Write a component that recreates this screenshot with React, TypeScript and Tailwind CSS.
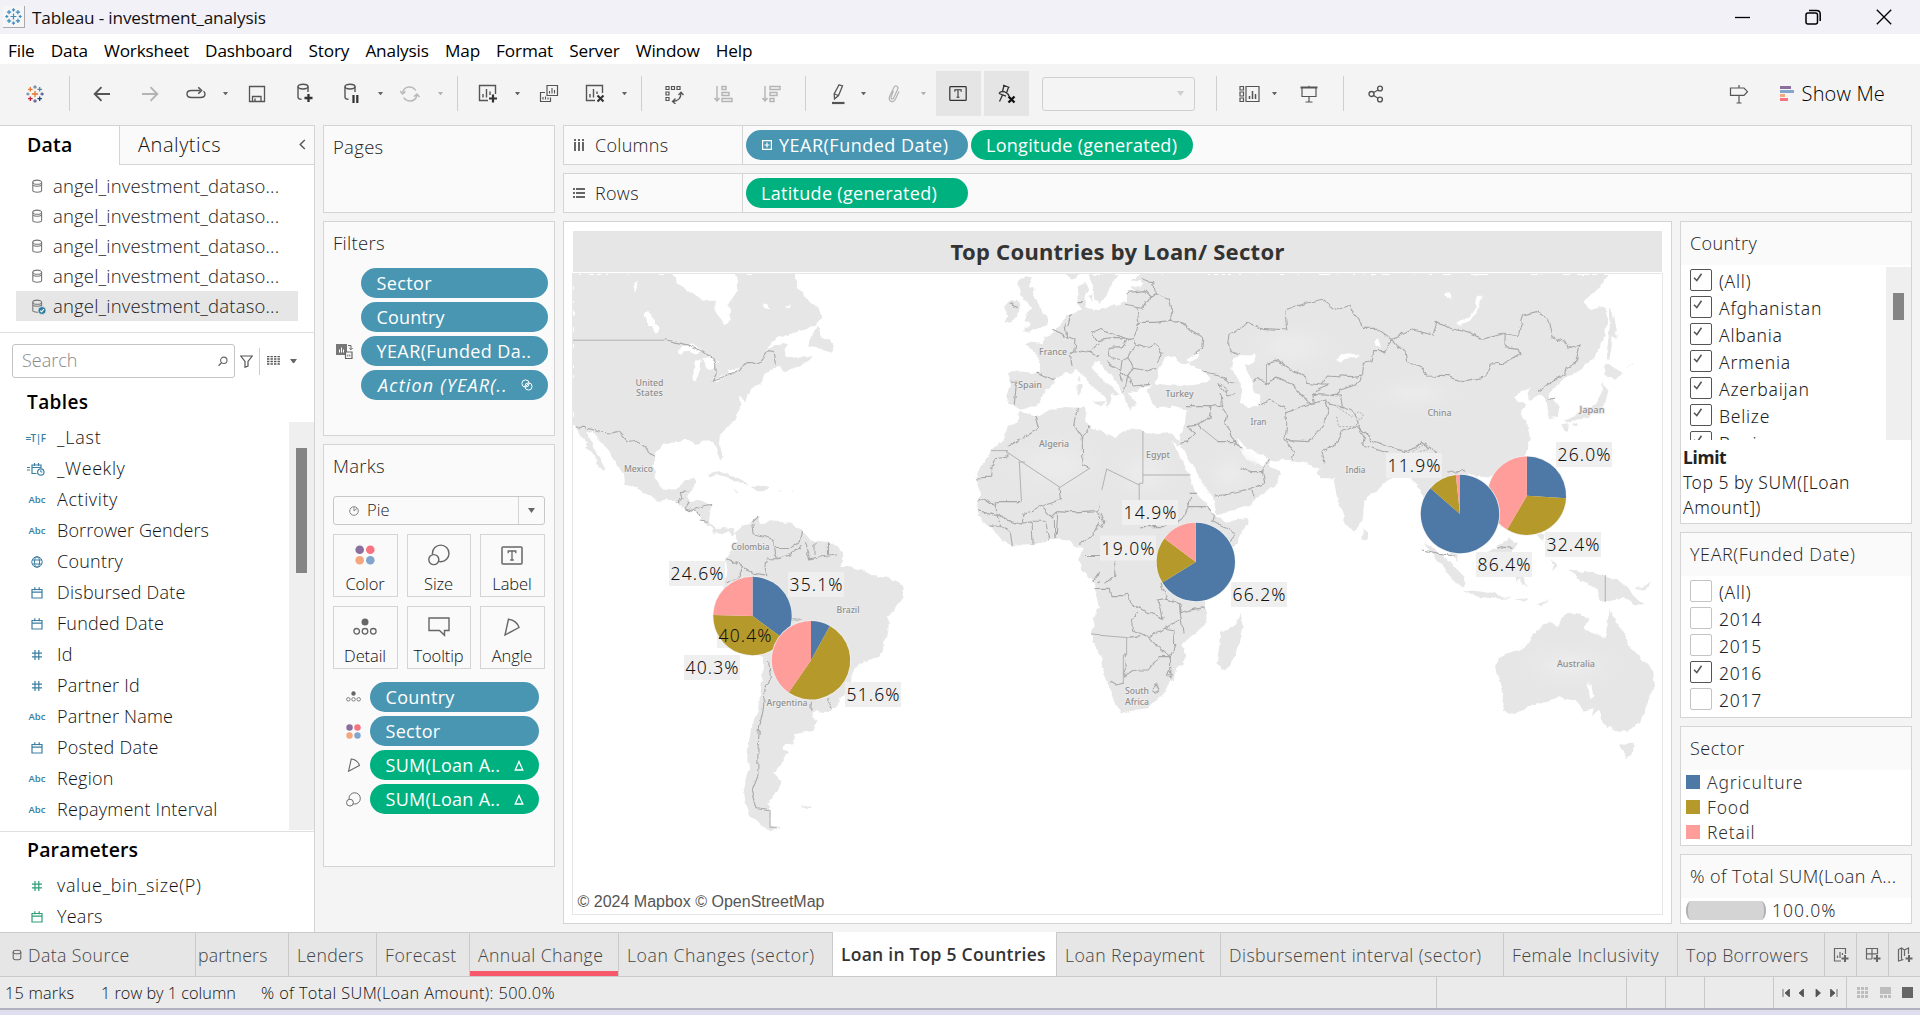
import React from "react";

const UI = "font-['Open_Sans','Noto_Sans',sans-serif]";

/* ---------- icons ---------- */
type IP = { className?: string; children?: React.ReactNode; w?: number; h?: number; vb?: string };
const Ico = ({ className = "", children, w = 20, h = 20, vb }: IP) => (
  <svg
    width={w}
    height={h}
    viewBox={vb ?? `0 0 ${w} ${h}`}
    fill="none"
    stroke="currentColor"
    strokeWidth={1.4}
    className={`shrink-0 ${className}`}
  >
    {children}
  </svg>
);

const Caret = ({ w = 5, className = "text-[#666]" }: { w?: number; className?: string }) => (
  <svg width={w} height={w * 0.7} viewBox="0 0 10 7" className={`shrink-0 ${className}`}>
    <path d="M0 0h10L5 7z" fill="currentColor" />
  </svg>
);

const plus = (x: number, y: number, r: number) => `M${x - r} ${y}h${r * 2}M${x} ${y - r}v${r * 2}`;

const TableauLogo = ({ mono = false, size = 18 }: { mono?: boolean; size?: number }) => {
  const c = mono
    ? Array(9).fill("#3f8ac0")
    : ["#e8762c", "#6b8fb0", "#e8762c", "#5b879b", "#7b95a5", "#59589b", "#c72035", "#5b6591", "#1f457e"];
  const pts: [number, number, number][] = [
    [9, 9, 3.1],
    [9, 2, 1.7],
    [4.3, 4.3, 2.3],
    [13.7, 4.3, 2.3],
    [1.9, 9, 1.6],
    [16.1, 9, 1.6],
    [4.3, 13.7, 2.3],
    [9, 16, 1.7],
    [13.7, 13.7, 2.3],
  ];
  return (
    <svg width={size} height={size} viewBox="0 0 18 18" className="shrink-0">
      {pts.map(([x, y, r], i) => (
        <path key={i} d={plus(x, y, r)} stroke={c[i]} strokeWidth={1.3} fill="none" />
      ))}
    </svg>
  );
};

const Cyl = ({ x = 0, cut = false }: { x?: number; cut?: boolean }) => (
  <g transform={`translate(${x} 0)`}>
    <ellipse cx="6" cy="3.6" rx="5" ry="2.4" />
    <path d={cut ? "M1 3.6v10.6c0 1.2 1.6 2 3.6 2.2M11 3.6v5.4" : "M1 3.6v10c0 1.3 2.2 2.4 5 2.4s5-1.1 5-2.4v-10"} />
  </g>
);

const DbIcon = ({ checked = false }: { checked?: boolean }) => (
  <Ico w={15} h={18} className="mt-[2px] text-[#777]">
    <g strokeWidth={1.1}>
      <ellipse cx="5.2" cy="4.2" rx="4.4" ry="2.1" />
      <path d="M.8 4.2v8.400c0 1.200 1.400 1.600 4.400 1.600s4.400-.4 4.400-1.600V4.200M.9 7.100c1 .9 2.300 1.200 4.300 1.200s3.300-.3 4.300-1.200" />
    </g>
    {checked && (
      <>
        <circle cx="10" cy="12.5" r="4" fill="#2e7ba0" stroke="#e6e6e6" strokeWidth={0.8} />
        <path d="M8.200 12.500l1.300 1.400 2.400-2.800" stroke="#fff" strokeWidth={1.1} />
      </>
    )}
  </Ico>
);

const CalShape = () => <path d="M1 3.500h10v8.500H1zM1 6.200h10M3.800 1.200v3M8.200 1.200v3" />;

const FieldIcon = ({ kind, green = false }: { kind: string; green?: boolean }) => {
  const color = green ? "text-[#2e9d76]" : "text-[#3a7ea1]";
  if (kind === "abc") return <span className={`text-[9.5px] font-semibold leading-none tracking-[0.1px] ${color}`}>Abc</span>;
  if (kind === "tf") return <span className={`text-[10px] font-semibold leading-none tracking-[-0.5px] ${color}`}>=T|F</span>;
  if (kind === "hash")
    return (
      <Ico w={12} h={12} className={color}>
        <path d="M4 1v10M7.800 1v10M1 4.200h10M1 7.800h10" strokeWidth={1.2} />
      </Ico>
    );
  if (kind === "globe")
    return (
      <Ico w={12} h={12} className={color}>
        <g strokeWidth={1}>
          <circle cx="6" cy="6" r="5.2" />
          <ellipse cx="6" cy="6" rx="2.5" ry="5.2" />
          <path d="M1.300 4h9.400M1.300 8h9.400" />
        </g>
      </Ico>
    );
  if (kind === "calc")
    return (
      <Ico w={18} h={14} className={color}>
        <g strokeWidth={1.2}>
          <path d="M0 5.500h3M0 8h3M14 6V3H5v8.500h4.500M5 5.500h9M7.500 1v3M11.500 1v3" />
          <circle cx="13.8" cy="10" r="3.2" />
          <path d="M13.800 8.200V10h1.500" strokeWidth={1} />
        </g>
      </Ico>
    );
  return (
    <Ico w={12} h={13} className={color}>
      <g strokeWidth={1.2}>
        <CalShape />
      </g>
    </Ico>
  );
};

const ColorDots = ({ s = 20 }: { s?: number }) => (
  <svg width={s} height={s} viewBox="0 0 20 20" className="shrink-0">
    <circle cx="4.7" cy="4.7" r="4.3" fill="#8a6f9e" />
    <circle cx="15.3" cy="4.7" r="4.3" fill="#f8727f" />
    <circle cx="4.7" cy="15.3" r="4.3" fill="#f4a77d" />
    <circle cx="15.3" cy="15.3" r="4.3" fill="#81a5cd" />
  </svg>
);
const SizeIcon = ({ s = 22 }: { s?: number }) => (
  <svg width={s} height={s} viewBox="0 0 22 22" fill="none" stroke="#666" strokeWidth={1.4} className="shrink-0">
    <circle cx="12.7" cy="9.4" r="8.3" />
    <circle cx="5.8" cy="15.6" r="5" fill="#fafafa" />
  </svg>
);
const DetailIcon = ({ s = 24 }: { s?: number }) => (
  <svg width={s} height={s * 0.75} viewBox="0 0 24 18" fill="none" stroke="#666" strokeWidth={1.3} className="shrink-0">
    <circle cx="12" cy="4" r="3.5" fill="#666" stroke="none" />
    <circle cx="3.7" cy="13.3" r="2.8" />
    <circle cx="12" cy="13.3" r="2.8" />
    <circle cx="20.3" cy="13.3" r="2.8" />
  </svg>
);
const AngleIcon = ({ s = 18 }: { s?: number }) => (
  <svg width={s} height={s} viewBox="0 0 18 18" fill="none" stroke="#666" strokeWidth={1.4} className="shrink-0">
    <path d="M5.500 1.200L2 17l14-7.500C14.500 5 10.500 1.800 5.500 1.200z" />
  </svg>
);
const TBox = ({ w, h, c = "#555" }: { w: number; h: number; c?: string }) => (
  <svg width={w} height={h} viewBox="0 0 22 19" fill="none" stroke={c} className="shrink-0">
    <rect x="1" y="1" width="20" height="17" rx="1" strokeWidth={1.5} />
    <path d="M7.200 7.300V5h7.600v2.300M11 5v9M9.200 14h3.600" strokeWidth={1.3} />
  </svg>
);

/* ---------- toolbar ---------- */
const Slot = ({ className, children }: { className: string; children: React.ReactNode }) => (
  <div className={`flex shrink-0 items-center justify-center ${className}`}>{children}</div>
);
const Sep = ({ className }: { className: string }) => <div className={`h-[35px] w-px shrink-0 bg-[#cfcfcf] ${className}`} />;

const Toolbar = () => (
  <div className="flex h-[61px] shrink-0 items-center bg-[#f4f4f4] pb-[2px] text-[#555]">
    <Slot className="w-[69px]">
      <TableauLogo />
    </Slot>
    <Sep className="" />
    <Slot className="ml-2 w-12">
      <Ico>
        <path d="M18 10H3M9.500 3.200L2.700 10l6.800 6.800" strokeWidth={1.9} />
      </Ico>
    </Slot>
    <Slot className="w-12 text-[#b3b3b3]">
      <Ico>
        <path d="M2 10h15M10.500 3.200l6.800 6.800-6.800 6.800" strokeWidth={1.9} />
      </Ico>
    </Slot>
    <Slot className="w-[44px]">
      <Ico>
        <path d="M14 6.500H5.500C2.800 6.500 1 7.800 1 10s1.800 3.500 4.500 3.500h9c2.700 0 4.500-1.300 4.500-3.500 0-1-.5-2-1.500-2.700" />
        <path d="M12.300 3.300l3.200 3.200-3.200 3.200" strokeWidth={1.6} />
      </Ico>
    </Slot>
    <Slot className="w-[15px]">
      <Caret />
    </Slot>
    <Slot className="w-12">
      <Ico>
        <path d="M2.500 2.500h15v15h-15zM5.500 17.500v-5h8.500v5M8 17v-2.500" strokeWidth={1.3} />
      </Ico>
    </Slot>
    <Slot className="w-12">
      <Ico w={20} h={22}>
        <Cyl x={2} cut />
        <path d="M13.500 11v8M9.500 15h8" stroke="#333" strokeWidth={2.3} />
      </Ico>
    </Slot>
    <Slot className="w-[46px]">
      <Ico w={20} h={22}>
        <Cyl x={2} cut />
        <path d="M11.500 12v8M15.300 12v8" stroke="#333" strokeWidth={2.2} />
      </Ico>
    </Slot>
    <Slot className="w-[11px]">
      <Caret />
    </Slot>
    <Slot className="w-12 text-[#b9b9b9]">
      <Ico>
        <path d="M2.500 9C3.200 5.300 6 3 9.500 3c2.700 0 4.800 1.300 6.200 3.500M17 11c-.7 3.700-3.500 6-7 6-2.700 0-4.800-1.300-6.200-3.500" />
        <path d="M0 7l2.500 3 3-2.600M19.500 13L17 10l-3 2.600" />
      </Ico>
    </Slot>
    <Slot className="w-3">
      <Caret className="text-[#b3b3b3]" />
    </Slot>
    <Sep className="ml-[11px]" />
    <Slot className="ml-[6px] w-12">
      <Ico w={20} h={21}>
        <path d="M10 17.500H1.500v-15h16V11" />
        <path d="M5 14.500V11M8.500 14.500V6M12 12V8.500" />
        <path d="M15 11.500v8M11 15.500h8" stroke="#333" strokeWidth={2.2} />
      </Ico>
    </Slot>
    <Slot className="w-[11px]">
      <Caret />
    </Slot>
    <Slot className="w-[52px]">
      <Ico>
        <path d="M6 8.500H1.500v9h10v-4M8 1.500h10.500v10H8z" strokeWidth={1.2} />
        <path d="M10.500 9.500V7M13 9.500V4M15.500 9.500V6M4 15.500V13M6.500 15.500V12.500M9 15.500V13.500" strokeWidth={1.1} />
      </Ico>
    </Slot>
    <Slot className="w-10">
      <Ico w={20} h={21}>
        <path d="M10 17.500H1.500v-15h16V10" />
        <path d="M5 14.500V11M8.500 14.500V6M12 11V8.500" />
        <path d="M12.500 12.500l6 6M18.500 12.500l-6 6" stroke="#333" strokeWidth={2.1} />
      </Ico>
    </Slot>
    <Slot className="w-[18px]">
      <Caret />
    </Slot>
    <Sep className="ml-2" />
    <Slot className="ml-2 w-12">
      <Ico>
        <path d="M2 2.500h3v3H2zM7.500 2.500h3v3h-3zM13 2.500h3v3h-3zM2 8h3v3H2zM2 13.500h3v3H2z" strokeWidth={1.2} />
        <path d="M17 9c0 5-2.500 8-8 8.500M14.500 11L17 8.300l2.500 2.700M11.500 14.500l-3 3 3 2.500" strokeWidth={1.3} />
      </Ico>
    </Slot>
    <Slot className="w-[49px] text-[#b3b3b3]">
      <Ico>
        <path d="M4 2v15M1.500 14L4 17l2.500-3M9 2.500h4v3H9zM9 8.500h7v3H9zM9 14.500h10v3H9z" />
      </Ico>
    </Slot>
    <Slot className="w-12 text-[#b3b3b3]">
      <Ico>
        <path d="M4 2v15M1.500 14L4 17l2.500-3M9 2.500h10v3H9zM9 8.500h7v3H9zM9 14.500h4v3H9z" />
      </Ico>
    </Slot>
    <Sep className="ml-[10px]" />
    <Slot className="ml-[14px] w-9">
      <Ico w={18} h={22}>
        <path d="M10 1.800l3.500 1.200-4 9.500-4 3.500-.3-5zM5.500 11l4 1.500" strokeWidth={1.3} />
        <path d="M3 20h12.500" strokeWidth={2.2} />
      </Ico>
    </Slot>
    <Slot className="w-[14px]">
      <Caret />
    </Slot>
    <Slot className="w-[50px] text-[#b3b3b3]">
      <Ico>
        <path
          d="M8 7l-1.500 6.500c-.3 2 2 2.500 2.600.8L12 5c.8-3-2.800-4.500-4-1.200L5 13c-1.200 5.500 4.800 6.500 6 2.500l2.600-8.500"
          transform="rotate(8 10 10)"
          strokeWidth={1.2}
        />
      </Ico>
    </Slot>
    <Slot className="w-[7px]">
      <Caret className="text-[#b3b3b3]" />
    </Slot>
    <Slot className="ml-[9px] h-[45px] w-[45px] bg-[#e5e5e5] pr-px">
      <TBox w={18} h={17} c="#333" />
    </Slot>
    <Slot className="ml-[3px] h-[45px] w-[45px] bg-[#e5e5e5]">
      <Ico w={20} h={20} className="text-[#333]">
        <path d="M6 1l6.500 2.500M7 1.500L5.500 7.500M11.500 3.300L9.500 9M2 9.500C3 7.500 6 7 8 8s3.500 2 4 4M2 9.500l7 2.700M5.500 11l-3 6.500" strokeWidth={1.3} />
        <path d="M11.500 12.500l6 6M17.500 12.500l-6 6" stroke="#111" strokeWidth={2.3} />
      </Ico>
    </Slot>
    <div className="ml-[13px] flex h-[34px] w-[153px] shrink-0 items-center justify-end rounded-[3px] border border-[#cfcfcf] pr-[10px]">
      <Caret w={7} className="text-[#cfcfcf]" />
    </div>
    <Sep className="ml-[21px]" />
    <Slot className="ml-[13px] w-[38px]">
      <Ico w={21} h={18}>
        <path d="M1 1.500h3.500V5H1zM1 7h3.500v4H1zM1 13h3.500v3.500H1zM7 1.500h13v15H7z" strokeWidth={1.2} />
        <path d="M10.500 14v-3M13.500 14V6M16.500 14V9" strokeWidth={1.5} />
      </Ico>
    </Slot>
    <Slot className="w-3">
      <Caret />
    </Slot>
    <Slot className="ml-[5px] w-12">
      <Ico w={18} h={18}>
        <path d="M.500 2.500h17" strokeWidth={2} />
        <path d="M2 3v8.500h14V3M9 .8V2M9 11.500V17M5.500 17h7" strokeWidth={1.2} />
      </Ico>
    </Slot>
    <Sep className="ml-[10px]" />
    <Slot className="ml-2 w-12">
      <Ico w={16} h={18}>
        <circle cx="3.5" cy="9" r="2.5" />
        <circle cx="12" cy="3.5" r="2.4" />
        <circle cx="12" cy="14.5" r="2.4" />
        <path d="M5.700 7.500L10 5M5.700 10.500l4.300 2.700" strokeWidth={1.2} />
      </Ico>
    </Slot>
    <Slot className="ml-auto w-12">
      <Ico w={20} h={20}>
        <path d="M1.500 4h13.500l3.500 3.700-3.500 3.600H1.500zM10 1v3M10 11.500V19M7.500 19h5" strokeWidth={1.2} />
      </Ico>
    </Slot>
    <svg width="14" height="15" viewBox="0 0 14 15" className="ml-[17px] shrink-0">
      <path d="M0 0h11v3H0z" fill="#8a6f9e" />
      <path d="M0 4h14v3H0z" fill="#81a5cd" />
      <path d="M0 8h5v3H0z" fill="#f4a77d" />
      <path d="M0 12h8v3H0z" fill="#f8727f" />
    </svg>
    <span className="ml-2 mr-[35px] whitespace-nowrap text-[20px] tracking-[0.15px] text-black">Show Me</span>
  </div>
);

/* ---------- pills and cards ---------- */
const Pill = ({ green = false, className = "", children }: { green?: boolean; className?: string; children: React.ReactNode }) => (
  <div
    className={`flex h-[30px] shrink-0 items-center whitespace-nowrap rounded-full text-[18px] font-normal text-white ${
      green ? "bg-[#00b180]" : "bg-[#4996b2]"
    } ${className}`}
  >
    {children}
  </div>
);

const Card = ({ className = "", children }: { className?: string; children?: React.ReactNode }) => (
  <div className={`shrink-0 border border-[#d4d4d4] bg-[#fafafa] ${className}`}>{children}</div>
);

const Delta = () => (
  <svg width="10" height="11" viewBox="0 0 10 11" fill="none" stroke="#fff" strokeWidth={1.3}>
    <path d="M5 1.500L1.200 10h7.600z" />
  </svg>
);

const MarkButton = ({ label, children }: { label: string; children: React.ReactNode }) => (
  <div className="flex h-[63px] flex-col items-center border border-[#d4d4d4] pt-1">
    <div className="flex h-8 items-center pr-px">{children}</div>
    <span className="mt-px pr-px text-[16.5px] leading-[24px] tracking-[-0.1px] text-[#111]">{label}</span>
  </div>
);

/* ---------- left data pane ---------- */
const FIELDS: [string, string][] = [
  ["tf", "_Last"],
  ["calc", "_Weekly"],
  ["abc", "Activity"],
  ["abc", "Borrower Genders"],
  ["globe", "Country"],
  ["cal", "Disbursed Date"],
  ["cal", "Funded Date"],
  ["hash", "Id"],
  ["hash", "Partner Id"],
  ["abc", "Partner Name"],
  ["cal", "Posted Date"],
  ["abc", "Region"],
  ["abc", "Repayment Interval"],
];

const SPACING: Record<string, string> = {
  _Last: "tracking-[0.8px]",
  _Weekly: "tracking-[0.6px]",
  Activity: "tracking-[0.6px]",
  "Borrower Genders": "tracking-[0.1px]",
  "Partner Name": "tracking-[0.22px]",
  "value_bin_size(P)": "tracking-[0.65px]",
};

const FieldRow = ({ kind, label, green = false }: { kind: string; label: string; green?: boolean }) => (
  <div className="flex h-[31px] items-center">
    <div className={`flex items-center justify-center pl-[17px] ${kind === "tf" || kind === "calc" ? "w-[54px]" : "w-[57px]"}`}>
      <FieldIcon kind={kind} green={green} />
    </div>
    <span
      className={`whitespace-nowrap text-[18px] text-[#111] ${SPACING[label] ?? "tracking-[0.24px]"} ${
        kind === "tf" || kind === "calc" ? "ml-[3px]" : ""
      }`}
    >
      {label}
    </span>
  </div>
);

const DataPane = () => (
  <div className="flex h-[807px] w-[315px] shrink-0 flex-col border-r border-t border-[#d4d4d4] bg-white">
    <div className="flex h-[39px] shrink-0">
      <div className="flex w-[119px] items-center pb-[2px] pl-[27px] text-[19.5px] font-semibold tracking-[0.2px] text-black">Data</div>
      <div className="flex flex-1 items-center justify-between border-b border-l border-[#d4d4d4] bg-[#fafafa] pb-px pl-[18px] pr-[8px]">
        <span className="text-[20px] tracking-[0.55px] text-[#111]">Analytics</span>
        <Ico w={7} h={11} className="text-[#555]">
          <path d="M5.800 1L1.200 5.500l4.600 4.500" />
        </Ico>
      </div>
    </div>
    <div className="mt-[6px] pl-4 pr-4">
      {[0, 1, 2, 3, 4].map((i) => (
        <div key={i} className={`flex h-[30px] items-center pl-4 ${i === 4 ? "bg-[#e6e6e6]" : ""}`}>
          <DbIcon checked={i === 4} />
          <span className="ml-[6px] whitespace-nowrap text-[18.5px] tracking-[0.18px] text-[#222]">angel_investment_dataso...</span>
        </div>
      ))}
    </div>
    <div className="mt-[11px] h-px shrink-0 bg-[#e0e0e0]" />
    <div className="mt-[11px] flex h-[34px] shrink-0 items-center">
      <div className="ml-3 flex h-[34px] w-[223px] items-center justify-between rounded-[3px] border border-[#c4c4c4] pl-[9px] pr-[6px]">
        <span className="pb-[2px] text-[18px] text-[#888]">Search</span>
        <Ico w={11} h={11} className="text-[#666]">
          <circle cx="6.8" cy="4.3" r="3.2" strokeWidth={1.1} />
          <path d="M4.500 6.800L1.500 9.800" strokeWidth={1.3} />
        </Ico>
      </div>
      <Ico w={13} h={14} className="ml-[5px] text-[#555]">
        <path d="M.8 2h11.400L8 7.500V12l-3 1.200V7.500z" strokeWidth={1.2} />
      </Ico>
      <div className="ml-[6px] h-[27px] w-px bg-[#cfcfcf]" />
      <svg width="13" height="10" viewBox="0 0 13 10" className="ml-[7px]">
        <path d="M0 .5h13M0 3h13M0 5.500h13M0 8h13" stroke="#555" strokeWidth={1.4} strokeDasharray="2.4 1.1" />
      </svg>
      <span className="ml-[10px]">
        <Caret w={7} />
      </span>
    </div>
    <div className="flex min-h-0 flex-1">
      <div className="flex w-[289px] flex-col pt-[7px]">
        <div className="flex h-[34px] items-center pl-[27px] text-[19px] font-semibold tracking-[0.4px] text-black">Tables</div>
        <div className="mt-[3px]">
          {FIELDS.map(([k, l]) => (
            <FieldRow key={l} kind={k} label={l} />
          ))}
        </div>
      </div>
      <div className="mt-[44px] h-[408px] w-[25px] bg-[#efefef] pl-[7px] pt-[26px]">
        <div className="h-[125px] w-[11px] bg-[#858585]" />
      </div>
    </div>
    <div className="h-[101px] shrink-0 border-t border-[#e0e0e0]">
      <div className="mb-[3px] flex h-[35px] items-center pl-[27px] text-[19.5px] font-semibold tracking-[0.15px] text-black">Parameters</div>
      <FieldRow kind="hash" label="value_bin_size(P)" green />
      <FieldRow kind="cal" label="Years" green />
    </div>
  </div>
);

/* ---------- shelf column ---------- */
const ShelfColumn = () => (
  <div className="ml-2 flex w-[232px] shrink-0 flex-col gap-2 text-[18.5px] tracking-[0.3px] text-[#222]">
    <Card className="h-[88px] pl-[9px] pt-[7px]">Pages</Card>
    <Card className="h-[215px] pl-[9px] pr-[6px] pt-[7px]">
      <div className="h-[28px]">Filters</div>
      <div className="mt-[11px] flex flex-col gap-1">
        {[
          ["Sector", "tracking-[0.4px]"],
          ["Country", "tracking-[0.15px]"],
          ["YEAR(Funded Da..", "tracking-[0.4px]"],
        ].map(([t, sp], i) => (
          <div key={t} className="flex items-center justify-end">
            {i === 2 && (
              <Ico w={17} h={16} className="mr-[8px] text-[#666]">
                <path d="M0 1h11v11H0z" fill="#777" stroke="none" />
                <path d="M3.500 9.500v-3M5.500 9.500v-5M7.500 9.500v-3" stroke="#fff" strokeWidth={1} />
                <path d="M9.500 9h6.500v6.500H9.500z" fill="#fafafa" strokeWidth={1.2} />
                <path d="M11.800 13.500v-2M13.800 13.500v-2" strokeWidth={1} />
                <path d="M12 2.500h3v4M13.300 5l1.700 1.700L16.700 5" strokeWidth={1} />
              </Ico>
            )}
            <Pill className={`w-[187px] pl-[15.5px] ${sp}`}>{t}</Pill>
          </div>
        ))}
        <div className="flex justify-end">
          <Pill className="w-[187px] justify-between pl-[17px] pr-[15px] italic tracking-[1.2px]">
            Action (YEAR(..
            <Ico w={12} h={12} className="text-white">
              <g strokeWidth={1}>
                <circle cx="4.5" cy="4.5" r="3.6" />
                <circle cx="7.5" cy="7.5" r="3.6" />
                <path d="M4.500 7.500l3-3" />
              </g>
            </Ico>
          </Pill>
        </div>
      </div>
    </Card>
    <Card className="h-[423px] pl-[9px] pr-[9px] pt-[7px]">
      <div className="h-[28px]">Marks</div>
      <div className="mt-4 flex h-[29px] items-center rounded-[3px] border border-[#c8c8c8]">
        <Ico w={10} h={10} className="ml-[15px] text-[#888]">
          <circle cx="5" cy="5" r="4.3" strokeWidth={1} />
          <path d="M5 1v4l3-2.500" strokeWidth={1} />
        </Ico>
        <span className="ml-[8px] pb-px text-[16.5px] tracking-normal">Pie</span>
        <div className="ml-auto flex h-full w-[26px] items-center justify-center border-l border-[#d4d4d4]">
          <Caret w={7} />
        </div>
      </div>
      <div className="mt-[9px] grid grid-cols-[65px_64px_65px] gap-[9px]">
        <MarkButton label="Color">
          <ColorDots />
        </MarkButton>
        <MarkButton label="Size">
          <SizeIcon />
        </MarkButton>
        <MarkButton label="Label">
          <TBox w={22} h={19} c="#666" />
        </MarkButton>
        <MarkButton label="Detail">
          <DetailIcon />
        </MarkButton>
        <MarkButton label="Tooltip">
          <Ico w={22} h={20} className="text-[#666]">
            <path d="M1 1h20v12.500h-4.500v4.800l-5-4.800H1z" />
          </Ico>
        </MarkButton>
        <MarkButton label="Angle">
          <AngleIcon />
        </MarkButton>
      </div>
      <div className="mt-[13px] flex flex-col gap-1">
        {[
          { t: "Country", g: false, i: <DetailIcon s={15} /> },
          { t: "Sector", g: false, i: <ColorDots s={15} /> },
          { t: "SUM(Loan A..", g: true, i: <AngleIcon s={14} /> },
          { t: "SUM(Loan A..", g: true, i: <SizeIcon s={15} /> },
        ].map((r, k) => (
          <div key={k} className="flex items-center">
            <div className="flex w-[37px] items-center justify-center pl-1">{r.i}</div>
            <Pill green={r.g} className="w-[169px] justify-between pl-[15.5px] pr-[15px] tracking-[0.3px]">
              {r.t}
              {r.g && <Delta />}
            </Pill>
          </div>
        ))}
      </div>
    </Card>
  </div>
);

/* ---------- map ---------- */
const LAND_WEST = [
  "M22 132H300L308 140 310 158 335 168 365 185 390 198 420 198 422 225 432 240 447 258 460 250 465 228 455 205 468 195 483 175 487 150 475 132H640L650 160 665 182 690 205 712 218 718 240 700 258 670 268 635 278 600 288 580 298 560 318 600 303 622 306 612 320 622 335 655 340 692 333 670 352 640 362 612 372 602 355 588 365 560 378 550 398 530 408 512 425 505 445 490 430 492 450 485 470 478 490 450 510 433 525 432 545 443 570 440 590 428 575 418 548 405 540 385 540 375 550 340 540 310 545 275 548 255 570 248 600 255 635 275 660 295 662 320 655 335 635 365 632 370 640 358 655 345 680 350 690 385 688 410 698 405 725 403 740 420 758 445 752 470 755 480 768 470 775 458 762 440 770 415 765 400 745 383 732 365 712 335 708 312 695 290 685 265 687 230 675 195 655 168 645 165 625 150 605 130 575 105 550 90 530 75 520 60 522 75 545 90 575 117 607 110 612 90 597 80 575 60 560 62 545 45 530 35 515 22 495Z",
  "M680 310L695 280 708 258 716 270 718 285 738 292 750 308 745 326 730 318 708 314Z",
  "M398 625L430 615 470 628 500 640 515 650 490 645 455 630 425 622 405 630Z",
  "M518 655L540 648 575 658 560 665 535 660Z",
  "M470 662L488 664 480 667ZM590 662L606 663 598 666ZM635 663L638 663 638 667ZM468 597L472 605 470 600Z",
  "M478 765L495 750 515 745 530 732 545 728 545 745 570 738 600 740 635 738 650 755 665 762 690 785 735 788 765 800 780 820 775 850 800 850 840 860 870 875 900 875 930 885 948 900 948 925 930 945 908 970 905 1010 895 1035 880 1070 850 1080 820 1090 805 1110 800 1135 785 1160 765 1185 745 1205 725 1208 700 1200 690 1205 705 1232 695 1250 660 1257 645 1260 640 1282 615 1285 612 1300 627 1304 612 1318 605 1335 585 1355 606 1375 600 1395 585 1408 568 1432 577 1452 575 1482 605 1490 575 1500 545 1480 520 1460 505 1430 500 1388 515 1350 512 1300 522 1240 540 1200 552 1130 555 1070 530 1050 500 1020 475 980 450 920 440 890 455 860 450 830 470 810 480 785Z",
  "M660 1437L690 1434 680 1443Z",
  "M1270 150L1285 137 1310 140 1300 160 1315 170 1310 185 1330 205 1338 230 1355 240 1350 258 1325 265 1300 270 1280 275 1302 255 1290 245 1292 230 1308 218 1295 205 1285 190 1275 185 1270 165Z",
  "M1228 213L1245 200 1265 195 1275 210 1268 235 1250 248 1228 250 1238 235 1228 225Z",
  "M1240 375L1270 370 1310 375 1330 375 1330 350 1320 330 1288 303 1310 298 1338 302 1340 287 1365 278 1385 258 1400 240 1425 225 1447 220 1435 200 1435 165 1455 152 1465 170 1455 190 1457 215 1475 218 1500 222 1540 210 1568 200V415L1545 385 1520 352 1500 345 1480 347 1478 362 1500 385 1530 408 1553 428 1540 430 1525 425 1532 440 1515 458 1515 440 1500 425 1470 402 1450 382 1435 366 1420 374 1400 375 1375 385 1367 402 1345 415 1335 435 1320 455 1300 460 1275 465 1255 453 1238 450 1240 420 1248 395Z",
  "M1480 445L1510 444 1505 458ZM1435 405L1446 404 1443 430 1435 428ZM1440 380L1446 385 1442 400Z",
  "M1466 132H1550L1540 145 1525 160 1520 185 1500 202 1486 195 1478 165ZM1400 132H1437L1425 145ZM1465 185L1480 185 1478 200Z",
  "M1275 468L1310 478 1330 478 1365 465 1400 458 1435 460 1455 458 1460 475 1453 490 1470 508 1500 515 1530 530 1550 532 1568 515V1205L1545 1190 1525 1140 1508 1115 1500 1070 1475 1030 1480 980 1495 950 1485 910 1478 885 1445 855 1440 830 1450 800 1430 800 1410 785 1380 783 1350 785 1310 795 1280 795 1255 800 1225 785 1200 760 1175 740 1155 720 1155 690 1165 670 1150 635 1160 610 1195 565 1225 540 1240 505 1270 490Z",
];
const WATER_WEST = [
  "M310 325L330 310 355 303 385 320 370 327 345 320 325 330Z",
  "M360 348L385 340 378 350 375 375 370 394 360 390Z",
  "M385 338L410 335 420 350 430 345 418 362 405 368 395 355Z",
  "M412 396L440 382 462 374 445 388 425 397ZM455 368L485 360 480 368 462 374Z",
  "M222 228L236 220 250 245 262 265 255 280 245 262 235 262Z",
  "M190 165L203 148 205 155 196 178ZM552 205L565 205 578 222 560 218ZM610 212L632 207 630 216Z",
];
const BORDERS_WEST =
  "M278 292L300 298 345 306 380 320 410 338 422 352 423 375 413 395 440 388 460 375 485 370 500 353 545 350 568 320 585 322 592 352M30 507L55 508 95 520 130 522 150 518 178 545 205 542 222 555 235 575 255 582M325 668L350 665M325 668L330 680 312 695M345 690L335 705 360 712 385 700 412 697M365 712L375 725M380 735L400 738M540 728L525 740 530 770 555 775 585 782 585 810 592 830 565 830 560 845 565 875M455 830L500 850 530 868 560 872M500 850L485 875 450 890M665 762L660 785 630 805 585 805M670 790L685 830 720 825 765 820M700 790L700 820M735 790L735 820M592 830L630 820 660 800M560 972L600 975 660 978M575 1118L560 1150 555 1200 545 1240 540 1300 540 1360 522 1400 535 1440 575 1445M690 1180L688 1200M735 1172L748 1200M575 1118L570 1080M1250 395L1265 395 1258 450M1320 375L1345 385 1375 388M1365 270L1400 285 1428 292M1400 255L1405 288M1418 228L1408 260M1500 222L1505 265 1475 275 1490 295 1520 295 1545 282 1568 285M1428 292L1425 318 1415 330 1420 360M1425 318L1470 325 1500 300 1540 300M1470 325L1500 335 1530 318 1568 305M1500 335L1520 350 1568 340M1515 350L1540 385 1565 378M1435 200L1450 200M1248 205L1268 215M1318 478L1328 510 1300 525 1240 555M1435 460L1425 500 1448 530 1450 600 1470 608M1470 505L1450 535M1150 632L1195 630 1195 605 1205 585 1240 580 1240 565M1205 690L1277 690M1386 655L1390 685 1335 700 1285 720 1280 745 1250 740 1205 720 1205 690M1505 615L1515 640 1510 680 1490 712 1430 715 1380 712 1375 780M1335 700L1365 730 1380 712M1155 690L1175 682 1205 700M1155 712L1210 725 1220 750 1190 750M1220 750L1250 765 1255 800M1280 745L1305 742 1308 793M1305 738L1345 738 1358 785M1370 735L1372 783M1490 712L1500 740 1480 775 1440 795M1500 740L1520 765 1568 760M1450 822L1500 822 1500 860 1475 890M1500 822L1540 830 1530 870 1490 890M1480 903L1525 903 1545 920 1568 912M1520 1135L1560 1135";
const STRAIGHT_WEST =
  "M22 294.500H278M1240 570L1386 655L1470 608M1272 593L1278 690M1270 593H1288M1516 612L1568 632M1473 1014L1568 1022M1563 1065V1132M574 1445V1488H592M1193 565H1240";

const LAND_EAST = [
  "M0 150L30 138 70 130 75 100 95 92 80 80 110 82 115 70 88 60 110 42H1378L1350 80 1305 127 1325 150 1365 138 1372 175 1365 230 1330 300 1290 340 1258 350 1228 385 1215 405 1240 440 1238 470 1210 475 1213 440 1205 415 1190 402 1162 420 1158 395 1165 380 1120 408 1130 430 1152 430 1135 455 1155 490 1162 540 1150 580 1110 630 1060 650 1020 650 1000 640 985 660 1000 690 1030 730 1030 780 1000 800 975 810 940 770 945 810 970 880 968 905 945 880 920 830 905 790 890 740 870 700 860 680 840 655 830 625 800 625 785 655 750 690 715 720 710 780 685 814 665 790 640 710 632 655 600 655 582 640 600 625 560 610 510 603 460 600 440 583 400 570 368 535 378 575 400 600 440 622 452 592 462 625 490 640 470 680 430 710 400 735 350 755 315 763 305 710 275 665 240 600 215 550 218 520 232 490 236 450 200 440 150 445 135 415 128 385 145 375 105 380 100 395 75 400 97 430 82 450 70 425 60 395 45 370 20 335 0 312Z",
  "M0 525L30 537 60 520 85 505 115 512 150 522 195 520 215 540 212 560 195 540 205 570 225 605 240 640 258 695 280 720 300 750 322 775 345 785 396 773 395 795 370 850 330 900 300 950 285 990 278 1010 285 1045 285 1090 250 1125 220 1155 230 1185 225 1215 205 1225 200 1255 170 1300 130 1345 90 1350 60 1358 45 1335 30 1290 20 1250 8 1190 0 1170Z",
  "M378 1062L388 1100 375 1160 352 1220 330 1230 315 1210 322 1165 325 1120 350 1105 368 1090Z",
  "M710 800L725 820 724 838 710 836Z",
  "M1370 310L1390 328 1415 335 1392 358 1370 350 1360 345ZM1360 365L1375 395 1365 428 1345 455 1320 472 1290 480 1262 490 1255 483 1300 460 1335 437 1358 400ZM1248 497L1265 492 1262 515 1252 512ZM1275 492L1295 485 1290 495ZM1420 330L1450 303 1440 315Z",
  "M1376 140L1390 165 1400 235 1386 225 1382 270 1376 300 1370 280 1378 200Z",
  "M875 850L905 865 945 905 985 950 985 982 962 970 930 925 900 885Z",
  "M1040 880L1070 860 1105 835 1130 850 1112 880 1110 910 1090 945 1050 945 1035 910Z",
  "M980 990L1020 993 1065 1003 1115 1015 1070 1017 1010 1007ZM1120 1018L1160 1015 1150 1024ZM1180 1035L1215 1015 1195 1035Z",
  "M1125 910L1165 903 1165 910 1140 920 1155 935 1143 945 1155 982 1145 975 1135 955 1125 965 1122 935Z",
  "M1180 815L1200 825 1200 845 1188 835ZM1225 890L1235 920 1225 935Z",
  "M1265 925L1300 938 1330 935 1365 945 1400 958 1430 985 1440 1005 1470 1035 1440 1032 1415 1008 1385 1025 1350 1020 1342 985 1300 965 1285 945Z",
  "M1447 985L1480 978 1493 962 1485 985 1465 992Z",
  "M1075 1190L1130 1170 1165 1150 1172 1120 1210 1087 1238 1097 1255 1063 1290 1060 1320 1075 1310 1100 1345 1125 1368 1130 1370 1090 1380 1048 1395 1090 1415 1110 1428 1155 1460 1190 1495 1230 1500 1280 1480 1330 1460 1390 1430 1405 1425 1418 1390 1412 1360 1390 1350 1350 1330 1372 1335 1345 1308 1352 1285 1322 1240 1312 1190 1330 1150 1345 1120 1362 1090 1352 1092 1300 1070 1230Z",
  "M1406 1450L1443 1453 1440 1480 1425 1495 1415 1480Z",
];
const WATER_EAST = [
  "M148 370L160 325 180 285 205 290 220 312 240 312 275 330 296 355 285 370 225 378 180 375Z",
  "M230 300L268 273 262 295 240 310Z",
  "M355 300L385 288 420 280 418 305 395 313 398 335 412 370 412 395 435 405 430 435 405 442 378 425 385 390 370 350 355 325Z",
  "M638 303L650 285 672 280 700 285 690 292 662 293 648 308Z",
  "M962 192L998 170 1015 145 1020 110 1032 110 1025 145 1000 182 975 195Z",
  "M930 100L945 97 955 120 940 115ZM745 240L755 235 758 262 748 258ZM1318 1262L1328 1280 1335 1310 1325 1315Z",
];
const BORDERS_EAST =
  "M75 97L120 92 135 110 115 145M110 58L145 65 150 100 135 110M150 100L185 115 190 140 200 155 185 185 215 182 245 210 278 232 275 265 255 280M115 145L65 135M100 140L105 190 90 235 75 238 0 205M105 190L150 190 185 185M0 240L40 235 75 238 60 260 25 262M90 235L95 255 130 262 150 250 168 280 155 305M95 255L75 290 60 300 22 290 25 262M75 290L90 325 130 333 155 325M60 300L55 335 75 350 90 325M20 305L55 330M75 350L65 395M75 350L90 375 135 370M55 335L60 365M348 250L352 220 400 190 440 205 505 210 500 150 540 135 600 118 640 150 672 137 700 180 710 205 745 205 788 238 840 208 900 225 912 185 945 205 985 215 1035 238 1095 220 1130 230 1145 165 1180 155 1210 175 1222 230 1255 240 1265 265 1298 255 1285 310 1260 320 1255 345 1215 370 1185 395M348 250L358 275 375 285M788 238L770 275 740 275 735 305 712 310 710 345 680 350 615 345 595 375 560 370 548 345 520 330 480 302 450 312M788 238L825 280 830 305 870 320 885 348 940 350 980 365 1040 350 1055 312 1090 310 1138 280 1130 265 1095 260 1095 222M450 370L425 355 415 365M450 370L480 350 520 375 560 425 580 430 575 400 620 375 595 375M575 400L650 405 655 440 690 460 700 500 735 540 790 565 830 575 870 548 910 575 900 590M710 345L690 375 650 390 635 405M278 335L320 345 345 365 368 370M318 370L345 405 368 400M325 375L345 385 340 405M325 405L328 435 300 440 295 475 265 495 235 500M328 435L345 465 340 490 365 545 320 545M275 505L265 495M235 440L300 440M428 432L460 420 500 440 505 490 500 540 525 575 520 600M500 460L540 440 610 420 618 450 605 490 565 545 505 542M618 430L660 445M700 500L655 510 640 550 600 575 608 610M700 500L715 535 710 555 780 580M240 545L215 550M235 500L255 520 235 550M365 550L385 575M455 595L440 635 410 635 380 620M440 635L445 670 415 685 350 700 310 705M410 685L418 715M790 565L835 575 825 605 835 630M910 575L900 610 880 640M1205 420L1230 415M940 640L990 630M870 870L965 890M1075 860L1115 865M240 700L262 700M240 740L290 740 310 765M310 765L305 785 365 820 345 855M110 800L170 800 225 775 240 740M240 740L245 710M0 760L10 785 0 800M0 985L25 985 30 1010 60 1010 75 1000 85 1035 130 1055 170 1075 165 1045 155 1020 180 1015 170 985 165 965M180 1015L215 1035 220 1055 283 1043M215 1040L220 1080 225 1120M105 1060L85 1075 88 1110 130 1130 155 1160 190 1190 202 1160 200 1110 175 1105 130 1130M175 1105L215 1080M75 1135L110 1130M190 1190L160 1190 130 1230 95 1230 70 1248 65 1180M190 1190L192 1250 180 1245 185 1235 197 1245M30 1265L45 1275 62 1270M140 1285L152 1272 163 1285 150 1300 140 1290M15 970L40 945 40 905";
const STRAIGHT_EAST = "M116 513V645H245M116 645V670H106V720M106 675L18 627 5 690M1366 945V1025M72 1135V1185H63V1270M0 1126L75 1133M450 312V370M275 505L320 545";
const DASHED_EAST = "M640 440L680 470 700 455 712 465 705 480 690 470M640 470L645 500 690 500 700 480M845 575L880 550 885 570 860 575";

const MAP_LABELS: [number, number, string, number][] = [
  [649.5, 385.5, "United", 28],
  [649.5, 396, "States", 27],
  [638.5, 471.5, "Mexico", 29],
  [750.5, 550, "Colombia", 38],
  [848, 612.5, "Brazil", 23],
  [787, 706, "Argentina", 41],
  [1053, 355, "France", 28],
  [1030, 388, "Spain", 24],
  [1054, 447, "Algeria", 30],
  [1179.5, 396.5, "Turkey", 28],
  [1258.5, 424.5, "Iran", 16],
  [1439.5, 416, "China", 24],
  [1592, 412.5, "Japan", 25],
  [1158, 458, "Egypt", 24],
  [1355.5, 473, "India", 20],
  [1576, 667, "Australia", 38],
  [1137, 694, "South", 24],
  [1137, 704.5, "Africa", 24],
];

const C = { a: "#4e79a7", f: "#b5992b", r: "#ff9d9a" };
const PIES: { x: number; y: number; s: [string, number][] }[] = [
  { x: 752.5, y: 616, s: [[C.a, 35.1], [C.f, 40.3], [C.r, 24.6]] },
  { x: 811, y: 660.3, s: [[C.a, 8], [C.f, 51.6], [C.r, 40.4]] },
  { x: 1195.8, y: 562, s: [[C.a, 66.2], [C.f, 19], [C.r, 14.8]] },
  { x: 1526.9, y: 495.7, s: [[C.a, 26], [C.f, 32.4], [C.r, 41.6]] },
  { x: 1460, y: 514, s: [[C.a, 86.4], [C.f, 11.9], [C.r, 1.7]] },
];

const Pie = ({ x, y, s }: { x: number; y: number; s: [string, number][] }) => {
  const R = 39.2;
  let acc = 0;
  const p = (v: number) => {
    const t = (v / 100) * 2 * Math.PI;
    return `${x + R * Math.sin(t)} ${y - R * Math.cos(t)}`;
  };
  return (
    <g>
      <circle cx={x} cy={y} r={R + 0.8} fill="#f0f0f0" />
      {s.map(([c, v]) => {
        const d = `M${x} ${y}L${p(acc)}A${R} ${R} 0 ${v > 50 ? 1 : 0} 1 ${p(acc + v)}Z`;
        acc += v;
        return <path key={c} d={d} fill={c} />;
      })}
    </g>
  );
};

const PCTS: [number, number, string][] = [
  [669, 561, "24.6%"],
  [788, 572, "35.1%"],
  [684, 655, "40.3%"],
  [845, 682, "51.6%"],
  [1122, 500, "14.9%"],
  [1100, 535.5, "19.0%"],
  [1231, 582, "66.2%"],
  [1386, 453, "11.9%"],
  [1556, 442, "26.0%"],
  [1545, 532, "32.4%"],
  [1476, 552, "86.4%"],
];

const PctText = ({ x, y, t }: { x: number; y: number; t: string }) => (
  <text x={x + 1.5} y={y + 19} fontSize="17.5" fill="#111" textLength="53" lengthAdjust="spacing">
    {t}
  </text>
);

type RegionProps = {
  t: string;
  land: string[];
  water: string[];
  borders: string;
  straight: string;
  dashed?: string;
  shades: [number, number, number, number][];
};
const Region = ({ t, land, water, borders, straight, dashed, shades }: RegionProps) => (
  <>
    <g filter="url(#rough)">
      <g transform={t}>
        <path d={land.join("")} fill="#e6e6e6" />
        {shades.map(([cx, cy, rx, ry]) => (
          <ellipse key={cx} cx={cx} cy={cy} rx={rx} ry={ry} fill="url(#arid)" />
        ))}
        <path d={water.join("")} fill="#fff" />
        <path d={borders} fill="none" stroke="#a8a8a8" strokeWidth={1.1} vectorEffect="non-scaling-stroke" />
      </g>
    </g>
    <g transform={t} fill="none" stroke="#b2b2b2">
      <path d={straight} vectorEffect="non-scaling-stroke" />
      {dashed && <path d={dashed} strokeDasharray="2 1.5" vectorEffect="non-scaling-stroke" />}
    </g>
  </>
);

const WorldMap = () => (
  <svg width="1089" height="641" viewBox="573 274 1089 641" className={`block ${UI}`}>
    <defs>
      <radialGradient id="arid">
        <stop offset="0.2" stopColor="#ebebeb" />
        <stop offset="1" stopColor="#e6e6e6" stopOpacity="0" />
      </radialGradient>
      <filter id="rough" filterUnits="userSpaceOnUse" x="560" y="260" width="1110" height="660">
        <feTurbulence type="fractalNoise" baseFrequency="0.11" numOctaves="3" seed="4" result="n" />
        <feDisplacementMap in="SourceGraphic" in2="n" scale="5.5" xChannelSelector="R" yChannelSelector="G" />
      </filter>
    </defs>
    <Region
      t="translate(565 220) scale(.35714 .40816)"
      land={LAND_WEST}
      water={WATER_WEST}
      borders={BORDERS_WEST}
      straight={STRAIGHT_WEST}
      shades={[[1375, 600, 185, 95]]}
    />
    <Region
      t="translate(1100 260) scale(.3699 .33333)"
      land={LAND_EAST}
      water={WATER_EAST}
      borders={BORDERS_EAST}
      straight={STRAIGHT_EAST}
      dashed={DASHED_EAST}
      shades={[
        [120, 640, 120, 100],
        [350, 640, 90, 85],
        [1270, 1215, 180, 95],
        [520, 260, 160, 100],
        [850, 400, 150, 70],
      ]}
    />
    <g fontSize="9.5" fontWeight="500" fill="#8f8f8f" stroke="#ececec" strokeWidth={2} paintOrder="stroke" textAnchor="middle" className="font-['Noto_Sans',sans-serif]">
      {MAP_LABELS.map(([x, y, l, w]) => (
        <text key={l} x={x} y={y} textLength={w} lengthAdjust="spacingAndGlyphs">
          {l}
        </text>
      ))}
    </g>
    <rect x="717" y="623" width="56" height="25" fill="#efefef" />
    {PCTS.map(([x, y, t]) => (
      <rect key={t} x={x} y={y} width="56" height="25" fill="#efefef" />
    ))}
    {PIES.map((p) => (
      <Pie key={p.x} {...p} />
    ))}
    <g className="font-['Noto_Sans',sans-serif]">
      {PCTS.map(([x, y, t]) => (
        <PctText key={t} x={x} y={y} t={t} />
      ))}
      <PctText x={717} y={623} t="40.4%" />
    </g>
    <text x="577.5" y="906.5" fontSize="16" fontWeight="400" fill="#555" textLength="247" lengthAdjust="spacingAndGlyphs" className="font-['Liberation_Sans',sans-serif]">
      © 2024 Mapbox © OpenStreetMap
    </text>
  </svg>
);

/* ---------- right filter cards ---------- */
const Check = ({ on = false, label }: { on?: boolean; label: string }) => (
  <div className="flex h-[27px] shrink-0 items-start">
    <div className={`h-[22px] w-[22px] shrink-0 rounded-[2px] border bg-white ${on ? "border-[#555]" : "border-[#c4c4c4]"}`}>
      {on && (
        <svg width="12" height="12" viewBox="0 0 12 12" className="ml-px mt-px">
          <path d="M2 6.800l2.800 2.800L9.500 2.800" fill="none" stroke="#555" strokeWidth={1.6} />
        </svg>
      )}
    </div>
    <span className="ml-[7px] whitespace-nowrap font-['Noto_Sans',sans-serif] text-[17.5px] font-light leading-[24px] tracking-[0.75px] text-[#222]">{label}</span>
  </div>
);
const FilterCard = ({ title, className, spacing, children }: { title: string; className: string; spacing: string; children: React.ReactNode }) => (
  <div className={`flex shrink-0 flex-col overflow-hidden border border-[#d4d4d4] bg-white ${className}`}>
    <div className={`flex h-[43px] shrink-0 items-center whitespace-nowrap bg-[#fafafa] pl-[9px] text-[18px] text-[#222] ${spacing}`}>{title}</div>
    {children}
  </div>
);

const RightColumn = () => (
  <div className="ml-2 flex w-[232px] shrink-0 flex-col gap-2">
    <FilterCard title="Country" className="h-[303px]" spacing="tracking-[0.4px]">
      <div className="flex h-[175px] shrink-0 justify-between overflow-hidden pt-[2px]">
        <div className="pl-[9px] pt-[2px]">
          {["(All)", "Afghanistan", "Albania", "Armenia", "Azerbaijan", "Belize", "Benin"].map((t) => (
            <Check key={t} on label={t} />
          ))}
        </div>
        <div className="w-[25px] bg-[#efefef] pl-[7px] pt-[26px]">
          <div className="h-[27px] w-[11px] bg-[#858585]" />
        </div>
      </div>
      <div className="pl-[2px] pt-[5px] font-['Noto_Sans',sans-serif] text-[17.5px] leading-[25px] text-[#222]">
        <div className="font-bold tracking-[-0.3px]">Limit</div>
        <div className="font-light tracking-[0.5px]">
          Top 5 by SUM([Loan
          <br />
          Amount])
        </div>
      </div>
    </FilterCard>
    <FilterCard title="YEAR(Funded Date)" className="h-[186px]" spacing="tracking-[0.6px]">
      <div className="pl-[9px] pt-[4px]">
        {["(All)", "2014", "2015", "2016", "2017"].map((t) => (
          <Check key={t} on={t === "2016"} label={t} />
        ))}
      </div>
    </FilterCard>
    <FilterCard title="Sector" className="h-[120px]" spacing="tracking-[0.5px]">
      <div className="pl-[5px] font-['Noto_Sans',sans-serif] text-[17.5px] font-light tracking-[0.8px] text-[#333]">
        {(
          [
            ["Agriculture", "bg-[#4e79a7]"],
            ["Food", "bg-[#b5992b]"],
            ["Retail", "bg-[#ff9d9a]"],
          ] as const
        ).map(([t, c]) => (
          <div key={t} className="flex h-[25px] items-center">
            <div className={`mb-[2px] h-[14px] w-[14px] ${c}`} />
            <span className="ml-[7px]">{t}</span>
          </div>
        ))}
      </div>
    </FilterCard>
    <FilterCard title="% of Total SUM(Loan A..." className="h-[70px]" spacing="tracking-[0.45px]">
      <div className="flex items-center pl-[5px] pt-[2px]">
        <div className="h-[19px] w-[80px] rounded-[5px/9px] border-x-2 border-[#b0b0b0] bg-[#d4d4d4]" />
        <span className="ml-[6px] font-['Noto_Sans',sans-serif] text-[17.5px] font-light leading-[20px] tracking-[1px] text-[#333]">100.0%</span>
      </div>
    </FilterCard>
  </div>
);

/* ---------- centre ---------- */
const Shelf = ({ name, icon, children }: { name: string; icon: React.ReactNode; children: React.ReactNode }) => (
  <div className="flex h-[40px] shrink-0 items-center border border-[#d4d4d4] bg-[#fafafa]">
    <div className="flex h-full w-[179px] items-center border-r border-[#d4d4d4] pl-[9px] text-[18px] tracking-[0.3px] text-[#222]">
      {icon}
      <span className="ml-[10px]">{name}</span>
    </div>
    <div className="ml-[3px] flex gap-[3px]">{children}</div>
  </div>
);

/* ---------- sheet tabs ---------- */
const TABS: [string, string][] = [
  ["partners", "w-[93px] pl-[2px] tracking-[0.2px]"],
  ["Lenders", "w-[88px] pl-2 tracking-[0.3px]"],
  ["Forecast", "w-[93px] pl-2 tracking-[0.5px]"],
  ["Annual Change", "w-[149px] pl-2 tracking-[0.4px]"],
  ["Loan Changes (sector)", "w-[214px] pl-2 tracking-[0.55px]"],
  ["Loan in Top 5 Countries", "w-[224px] pl-2 tracking-[0.25px]"],
  ["Loan Repayment", "w-[164px] pl-2 tracking-[0.45px]"],
  ["Disbursement interval (sector)", "w-[283px] pl-2 tracking-[0.45px]"],
  ["Female Inclusivity", "w-[174px] pl-2 tracking-[0.5px]"],
  ["Top Borrowers", "w-[147px] pl-2 tracking-[0.35px]"],
];

const TabsBar = () => (
  <div className="flex h-[45px] shrink-0 border-b border-t border-[#cacaca] bg-[#e6e6e6] text-[17.7px] text-[#444]">
    <div className="flex w-[196px] shrink-0 items-center border-r border-[#cacaca] pl-[12px]">
      <Ico w={10} h={12} className="text-[#666]">
        <g strokeWidth={1.1}>
          <ellipse cx="5" cy="3" rx="3.8" ry="1.8" />
          <path d="M1.200 3v6c0 1 1.500 1.800 3.800 1.800S8.800 10 8.800 9V3" />
        </g>
      </Ico>
      <span className="ml-[6px] pt-px tracking-[0.4px]">Data Source</span>
    </div>
    {TABS.map(([t, w]) => (
      <div
        key={t}
        className={`relative flex shrink-0 items-center whitespace-nowrap border-r border-[#cacaca] pt-px ${w} ${
          t.startsWith("Loan in") ? "-mt-px bg-white text-[17.5px] font-semibold text-[#333]" : ""
        }`}
      >
        {t}
        {t === "Annual Change" && <div className="absolute inset-x-0 bottom-0 h-[5px] bg-[#f8596a]" />}
      </div>
    ))}
    <div className="flex min-w-0 flex-1 items-center text-[#666]">
      {[
        "M8 14H1.500V1.500h11V7M4.500 11V8.500M7 11V5M9.500 8V6",
        "M7 12H1.500V1.500h11V7M7 1.500V12M1.500 6.800h11",
        "M6.500 12.500L1.500 14V2.500L4.500 1l3 2 4-2V7M7.500 3v6M4.500 1.500v11",
      ].map((d, i) => (
        <div key={i} className={`flex h-full flex-1 items-center justify-center ${i < 2 ? "border-r border-[#cacaca]" : ""}`}>
          <Ico w={16} h={16}>
            <path d={d} strokeWidth={1.2} />
            <path d="M12 8v7M8.500 11.500h7" strokeWidth={2} />
          </Ico>
        </div>
      ))}
    </div>
  </div>
);

const StatusBar = () => (
  <div className="flex h-[31px] shrink-0 items-center bg-[#ebebeb] text-[16.3px] text-[#111]">
    <span className="ml-[5px] w-[96px] whitespace-nowrap pt-px tracking-[0.2px]">15 marks</span>
    <span className="w-[160px] whitespace-nowrap pt-px">1 row by 1 column</span>
    <span className="whitespace-nowrap pt-px tracking-[0.38px]">% of Total SUM(Loan Amount): 500.0%</span>
    <div className="ml-auto flex h-full shrink-0">
      <div className="w-[190px] border-l border-[#c8c8c8]" />
      <div className="w-[39px] border-l border-[#c8c8c8]" />
      <div className="w-[39px] border-l border-[#c8c8c8]" />
      <div className="w-[69px] border-l border-[#c8c8c8]" />
      <div className="flex w-[73px] items-center justify-between border-l border-[#c8c8c8] px-[8px] text-[#555]">
        {["M1 0v8M7.500 0v8L3 4z", "M5.500 0v8L1 4z", "M2 0v8l4.500-4z", "M7 0v8M.500 0v8L5 4z"].map((d) => (
          <svg key={d} width="8" height="8" viewBox="0 0 8 8">
            <path d={d} fill="currentColor" stroke="currentColor" strokeWidth={0.8} />
          </svg>
        ))}
      </div>
      <div className="flex w-[74px] items-center justify-between border-l border-[#c8c8c8] pl-[10px] pr-[7px]">
        <svg width="11" height="11" viewBox="0 0 11 11" fill="#bdbdbd">
          {[0, 4, 8].map((x) => [0, 4, 8].map((y) => <rect key={`${x}${y}`} x={x} y={y} width="3" height="3" />))}
        </svg>
        <svg width="11" height="11" viewBox="0 0 11 11" fill="#bdbdbd">
          <path d="M0 0h11v7H0zM0 8h3v3H0zM4 8h3v3H4zM8 8h3v3H8z" />
        </svg>
        <div className="h-[11px] w-[11px] bg-[#666]" />
      </div>
    </div>
  </div>
);

export default function App() {
  return (
    <div className={`flex h-[1015px] w-[1920px] flex-col overflow-hidden bg-[#f4f4f4] font-light ${UI}`}>
      <div className="flex h-[34px] shrink-0 items-center bg-[#f2f1f8] font-normal text-[#111]">
        <div className="ml-[3px] flex h-[22px] w-[22px] items-center justify-center border-b border-r border-[#aaa] bg-[#f6f6f6]">
          <TableauLogo mono size={17} />
        </div>
        <span className="ml-[7px] pt-[2px] text-[17.2px] tracking-[-0.17px]">Tableau - investment_analysis</span>
        <div className="ml-auto flex items-center">
          <Ico w={15} h={15} className="mr-[55px] text-black">
            <path d="M0 7.500h15" strokeWidth={1.3} />
          </Ico>
          <Ico w={16} h={16} className="mr-[55px] text-black">
            <rect x="1" y="4" width="11.5" height="11" rx="2" strokeWidth={1.5} />
            <path d="M4 1.500h7.500c2.300 0 3.700 1.300 3.700 3.500V12" strokeWidth={1.5} />
          </Ico>
          <Ico w={16} h={16} className="mr-[28px] text-black">
            <path d="M.8.800l14.400 14.400M15.200.800L.800 15.200" strokeWidth={1.3} />
          </Ico>
        </div>
      </div>
      <div className="flex h-[30px] shrink-0 items-center gap-[16.1px] bg-white pl-2 pt-[3px] text-[17.2px] font-normal tracking-[-0.15px] text-black">
        {["File", "Data", "Worksheet", "Dashboard", "Story", "Analysis", "Map", "Format", "Server", "Window", "Help"].map((m) => (
          <span key={m}>{m}</span>
        ))}
      </div>
      <Toolbar />
      <div className="flex h-[807px] shrink-0">
        <DataPane />
        <ShelfColumn />
        <div className="ml-2 flex w-[1349px] flex-col gap-2">
          <Shelf
            name="Columns"
            icon={
              <svg width="12" height="12" viewBox="0 0 12 12" fill="#666">
                <path d="M1 0h2v2H1zM5 0h2v2H5zM9 0h2v2H9zM1 3h2v9H1zM5 3h2v9H5zM9 3h2v9H9z" />
              </svg>
            }
          >
            <Pill className="w-[222px] pl-4 tracking-[0.5px]">
              <Ico w={10} h={10} className="mr-[7px] text-white">
                <path d="M.600.600h8.800v8.800H.600zM5 2.500v5M2.500 5h5" strokeWidth={1.2} />
              </Ico>
              YEAR(Funded Date)
            </Pill>
            <Pill green className="w-[222px] pl-[15px] tracking-[0.28px]">
              Longitude (generated)
            </Pill>
          </Shelf>
          <Shelf
            name="Rows"
            icon={
              <svg width="12" height="12" viewBox="0 0 12 12" fill="#666">
                <path d="M0 1h2v2H0zM0 5h2v2H0zM0 9h2v2H0zM3 1h9v2H3zM3 5h9v2H3zM3 9h9v2H3z" />
              </svg>
            }
          >
            <Pill green className="w-[222px] pl-[15px] tracking-[0.3px]">
              Latitude (generated)
            </Pill>
          </Shelf>
          <div className="flex">
            <div className="h-[703px] w-[1109px] shrink-0 border border-[#d4d4d4] bg-white px-[8px] pt-[9px]">
              <div className="ml-px flex h-[41px] w-[1089px] items-center justify-center bg-[#e6e6e6] font-['Noto_Sans',sans-serif] text-[22px] font-bold tracking-[0.25px] text-[#333]">
                Top Countries by Loan/ Sector
              </div>
              <div className="mt-px h-[642px] w-[1091px] overflow-hidden border border-[#e6e6e6]">
                <WorldMap />
              </div>
            </div>
            <RightColumn />
          </div>
        </div>
      </div>
      <TabsBar />
      <StatusBar />
      <div className="flex-1 border-t-2 border-[#b3b0c0] bg-[#dfdeef]" />
    </div>
  );
}
